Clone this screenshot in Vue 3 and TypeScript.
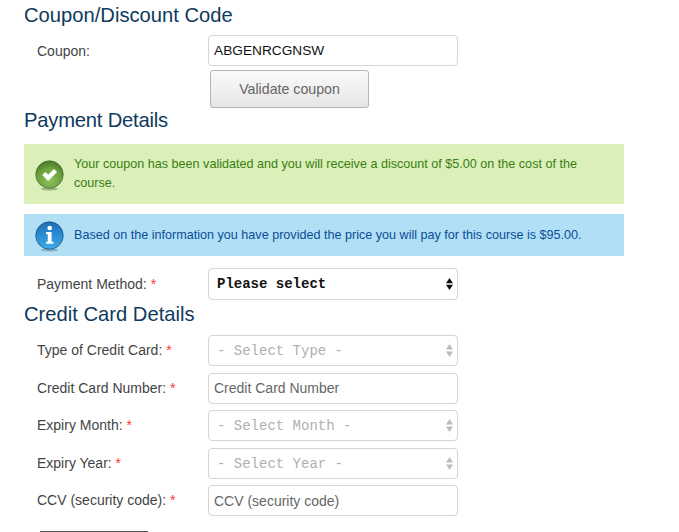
<template>
  <form class="page" @submit.prevent>
    <h2 class="section-title first">Coupon/Discount Code</h2>
    <div class="form-row coupon-row">
      <label class="form-label" for="coupon">Coupon:</label>
      <input id="coupon" v-model="coupon" class="form-control filled" type="text" />
    </div>
    <button type="button" class="btn validate-btn">Validate coupon</button>

    <h2 class="section-title payment-title">Payment Details</h2>
    <div class="alert alert-success">
      <svg class="alert-icon" viewBox="0 0 30 32" aria-hidden="true">
        <defs>
          <radialGradient id="green-ball" cx="50%" cy="70%" r="65%">
            <stop offset="0" stop-color="#8fc25a" />
            <stop offset="0.65" stop-color="#6ea23e" />
            <stop offset="1" stop-color="#4d7f2a" />
          </radialGradient>
        </defs>
        <ellipse cx="15" cy="30" rx="9" ry="1.5" fill="#7d9a6a" opacity="0.7" />
        <circle cx="15" cy="15" r="14.2" fill="url(#green-ball)" stroke="#4a6f33" stroke-width="0.8" />
        <path d="M7.500 15.500l3.200-3.200 2.900 2.900 6-6 3.200 3.200-9.200 9.200z" fill="#fff" />
      </svg>
      <p class="alert-text">Your coupon has been validated and you will receive a discount of $5.00 on the cost of the course.</p>
    </div>
    <div class="alert alert-info">
      <svg class="alert-icon" viewBox="0 0 30 32" aria-hidden="true">
        <defs>
          <linearGradient id="blue-ball" x1="0" y1="0" x2="0" y2="1">
            <stop offset="0" stop-color="#1f6db5" />
            <stop offset="0.55" stop-color="#2c90d6" />
            <stop offset="1" stop-color="#3eaee8" />
          </linearGradient>
        </defs>
        <ellipse cx="15" cy="30" rx="9" ry="1.5" fill="#6f93a8" opacity="0.7" />
        <circle cx="15" cy="15" r="14.2" fill="url(#blue-ball)" stroke="#1d4f80" stroke-width="0.8" />
        <circle cx="15.200" cy="7.200" r="2.400" fill="#fff" />
        <path d="M11.400 11.400h5.800v10h1.800v2.200h-7.600v-2.200h1.800v-7.800h-1.800z" fill="#fff" />
      </svg>
      <p class="alert-text">Based on the information you have provided the price you will pay for this course is $95.00.</p>
    </div>

    <div class="form-row payment-row">
      <label class="form-label" for="method">Payment Method: <span class="req">*</span></label>
      <div class="select-wrap">
        <select id="method" class="form-control select-control">
          <option>Please select</option>
        </select>
        <svg class="select-arrows" viewBox="0 0 8 14" preserveAspectRatio="none" aria-hidden="true">
          <path d="M4 0l4 6h-8zM4 14L0 8h8z" />
        </svg>
      </div>
    </div>

    <h2 class="section-title card-title">Credit Card Details</h2>
    <div class="card-fields">
      <div v-for="field in cardFields" :key="field.id" class="form-row">
        <label class="form-label" :for="field.id">{{ field.label }}: <span class="req">*</span></label>
        <div v-if="field.options" class="select-wrap disabled">
          <select :id="field.id" class="form-control select-control" disabled>
            <option>{{ field.options }}</option>
          </select>
          <svg class="select-arrows" viewBox="0 0 8 14" preserveAspectRatio="none" aria-hidden="true">
            <path d="M4 0l4 6h-8zM4 14L0 8h8z" />
          </svg>
        </div>
        <input v-else :id="field.id" class="form-control" type="text" :placeholder="field.label" />
      </div>
    </div>
    <button type="button" class="submit-edge" aria-label="Submit"></button>
  </form>
</template>

<script setup lang="ts">
import { ref } from 'vue'

interface CardField {
  id: string
  label: string
  options?: string
}

const coupon = ref('ABGENRCGNSW')

const cardFields: CardField[] = [
  { id: 'card-type', label: 'Type of Credit Card', options: '- Select Type -' },
  { id: 'card-number', label: 'Credit Card Number' },
  { id: 'expiry-month', label: 'Expiry Month', options: '- Select Month -' },
  { id: 'expiry-year', label: 'Expiry Year', options: '- Select Year -' },
  { id: 'ccv', label: 'CCV (security code)' }
]
</script>

<style scoped>
.page {
  box-sizing: border-box;
  width: 679px;
  padding: 0 0 0 24px;
  font-family: "Liberation Sans", Arial, sans-serif;
  font-size: 14px;
  color: #444;
}

.section-title {
  margin: 0;
  font-size: 20.2px;
  font-weight: 400;
  line-height: 24px;
  color: #0e3a5c;
}

.first {
  padding-top: 3px;
  margin-bottom: 8px;
}

.payment-title {
  margin-bottom: 12px;
  letter-spacing: -0.2px;
}

.card-title {
  margin-top: 2px;
  margin-bottom: 9px;
}

.form-row {
  display: flex;
  align-items: flex-start;
  height: 31px;
}

.form-label {
  box-sizing: border-box;
  width: 184px;
  padding: 6px 0 0 13px;
  line-height: 18px;
  color: #444;
}

.coupon-row .form-label,
.payment-row .form-label {
  padding-top: 7px;
}

.req {
  color: #f33;
}

.form-control {
  box-sizing: border-box;
  width: 250px;
  height: 31px;
  padding: 0 5px;
  margin: 0;
  border: 1px solid #d4d4d4;
  border-radius: 4px;
  background: #fff;
  font-family: inherit;
  font-size: 14px;
  color: #555;
  outline: none;
}

.form-control::placeholder {
  color: #666;
  opacity: 1;
}

.filled {
  font-size: 13.7px;
  color: #111;
}

.select-wrap {
  position: relative;
  width: 250px;
  height: 31px;
}

.select-control {
  display: block;
  appearance: none;
  padding: 0 8px;
  font-family: "Liberation Mono", "Courier New", monospace;
  font-size: 14px;
  font-weight: 700;
  color: #111;
  opacity: 1;
}

.select-arrows {
  position: absolute;
  top: 10px;
  right: 5px;
  width: 7px;
  height: 12px;
  fill: #111;
  pointer-events: none;
}

.disabled .select-control {
  font-weight: 400;
  color: #b0b0b0;
  padding-top: 1px;
}

.disabled .select-arrows {
  top: 9px;
  height: 13px;
  fill: #bdbdbd;
}

.btn {
  display: block;
  box-sizing: border-box;
  border: 1px solid #b5b5b5;
  border-radius: 3px;
  background: linear-gradient(#fafafa, #e6e6e6);
  font-family: inherit;
  font-size: 14.2px;
  color: #666;
}

.validate-btn {
  width: 159px;
  height: 38px;
  margin: 4px 0 0 186px;
}

.alert {
  display: flex;
  align-items: center;
  gap: 10px;
  box-sizing: border-box;
  width: 600px;
  padding: 11px;
}

.alert-icon {
  flex: none;
  width: 29px;
  height: 31px;
  margin-top: 2px;
}

.alert-text {
  margin: 0;
  font-size: 12.6px;
  line-height: 19px;
}

.alert-success {
  height: 60px;
  margin-bottom: 10px;
  background: #daf0b8;
  color: #3a7d12;
}

.alert-info {
  height: 42px;
  background: #b1e0f6;
  color: #0b4c96;
}

.payment-row {
  height: 32px;
  margin-top: 12px;
}

.payment-row .select-wrap,
.payment-row .select-control {
  height: 32px;
}

.card-fields {
  display: flex;
  flex-direction: column;
  gap: 6.5px;
}

.submit-edge {
  display: block;
  width: 108px;
  height: 1px;
  margin: 15px 0 0 16px;
  padding: 0;
  border: 0;
  background: #555;
}
</style>

<style>
html,
body {
  margin: 0;
  height: 532px;
  overflow: hidden;
  background: #fff;
}
</style>
